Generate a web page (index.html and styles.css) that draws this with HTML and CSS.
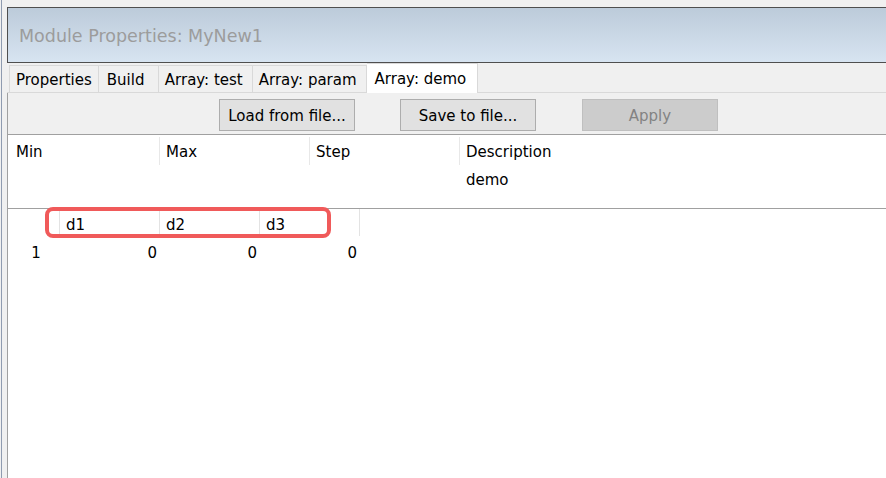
FILE: index.html
```html
<!DOCTYPE html>
<html lang="en">
<head>
    <meta charset="UTF-8">
    <meta name="viewport" content="width=device-width, initial-scale=1.0">
    <title>Module Properties</title>
    <link rel="stylesheet" href="styles.css">
</head>
<body>
    <div class="window">
        <div class="titlebar">Module Properties: MyNew1</div>

        <div class="tabs">
            <div class="tab tab-first">Properties</div>
            <div class="tab tab-build">Build</div>
            <div class="tab">Array: test</div>
            <div class="tab">Array: param</div>
            <div class="tab active">Array: demo</div>
        </div>

        <div class="panel">
            <div class="toolbar">
                <button class="btn">Load from file...</button>
                <button class="btn">Save to file...</button>
                <button class="btn" disabled>Apply</button>
            </div>

            <div class="content">
                <!-- Array settings -->
                <div class="props">
                    <div class="props-row head">
                        <div class="cell">Min</div>
                        <div class="cell">Max</div>
                        <div class="cell">Step</div>
                        <div class="cell">Description</div>
                    </div>
                    <div class="props-row">
                        <div class="cell"></div>
                        <div class="cell"></div>
                        <div class="cell"></div>
                        <div class="cell">demo</div>
                    </div>
                </div>

                <!-- Array values -->
                <div class="grid">
                    <div class="grid-row head">
                        <div class="row-label"></div>
                        <div class="gcell">d1</div>
                        <div class="gcell">d2</div>
                        <div class="gcell">d3</div>
                    </div>
                    <div class="grid-row">
                        <div class="row-label">1</div>
                        <div class="gcell">0</div>
                        <div class="gcell">0</div>
                        <div class="gcell">0</div>
                    </div>
                    <div class="highlight"></div>
                </div>
            </div>
        </div>
    </div>
</body>
</html>
```

FILE: styles.css
```css
html, body {
    height: 100%;
}

body {
    margin: 0;
    padding-left: 1px;
    background-color: #f0f0f0;
    font-family: "DejaVu Sans", Verdana, sans-serif;
    font-size: 15px;
    color: #000;
    overflow: hidden;
}

.window {
    height: 100%;
    display: flex;
    flex-direction: column;
    border-left: 1px solid #8f9bb0;
    padding-left: 5px;
    box-sizing: border-box;
}

/* Title bar */
.titlebar {
    margin-top: 7px;
    height: 56px;
    box-sizing: border-box;
    display: flex;
    align-items: center;
    padding: 2px 0 0 11px;
    border: 1px solid #4f4f4f;
    border-right: none;
    background: linear-gradient(to bottom, #bccbda, #d7e4f1);
    color: #9c9c9c;
    font-size: 17.5px;
}

/* Tabs */
.tabs {
    height: 30px;
    display: flex;
    align-items: flex-end;
    padding-left: 2px;
    box-shadow: inset 0 -1px #d9d9d9;
}

.tab {
    height: 28px;
    box-sizing: border-box;
    display: flex;
    align-items: center;
    padding: 2px 9px 0 6px;
    border: 1px solid #d9d9d9;
    border-left: none;
    background-color: #f0f0f0;
}

.tab-first {
    border-left: 1px solid #d9d9d9;
    padding-right: 6px;
}

.tab-build {
    min-width: 60px;
    padding-left: 8px;
}

.tab.active {
    height: 30px;
    background-color: #fff;
    border-bottom: none;
    padding: 0 11px 0 8px;
}

/* Panel */
.panel {
    flex: 1;
    display: flex;
    flex-direction: column;
    border-left: 1px solid #a0a0a0;
}

.toolbar {
    height: 42px;
    box-sizing: border-box;
    display: flex;
    gap: 45px;
    padding: 6px 0 0 211px;
    border-bottom: 1px solid #a0a0a0;
}

.btn {
    width: 136px;
    height: 32px;
    padding: 2px 0 0;
    border: 1px solid #adadad;
    background-color: #e1e1e1;
    font-family: inherit;
    font-size: 15px;
    color: #000;
}

.btn:disabled {
    margin-left: 1px;
    background-color: #cccccc;
    border-color: #bfbfbf;
    color: #838383;
}

.content {
    flex: 1;
    background-color: #fff;
}

/* Properties table */
.props {
    padding: 2px 0 16px 2px;
    border-bottom: 1px solid #a0a0a0;
}

.props-row {
    display: flex;
    height: 27px;
}

.props-row.head {
    height: 28px;
}

.cell {
    width: 150px;
    box-sizing: border-box;
    padding: 2px 0 0 6px;
    display: flex;
    align-items: center;
}

.props-row.head .cell {
    border-right: 1px solid #e8e8e8;
}

.props-row.head .cell:last-child {
    border-right: none;
}

/* Value grid */
.grid {
    position: relative;
}

.grid-row {
    display: flex;
    height: 28px;
}

.grid-row.head {
    height: 29px;
}

.row-label {
    width: 52px;
    box-sizing: border-box;
    display: flex;
    align-items: center;
    justify-content: center;
    padding: 2px 0 0 4px;
}

.gcell {
    width: 100px;
    box-sizing: border-box;
    display: flex;
    align-items: center;
    justify-content: flex-end;
    padding: 2px 3px 0 0;
}

.grid-row.head .row-label,
.grid-row.head .gcell {
    height: 27px;
    padding-top: 5px;
    border-right: 1px solid #e3e3e3;
}

.grid-row.head .gcell {
    justify-content: flex-start;
    padding-left: 6px;
}

/* Annotation box */
.highlight {
    position: absolute;
    left: 37px;
    top: -2px;
    width: 286px;
    height: 31px;
    box-sizing: border-box;
    border: 4px solid #f05a5a;
    border-radius: 8px;
}
```
